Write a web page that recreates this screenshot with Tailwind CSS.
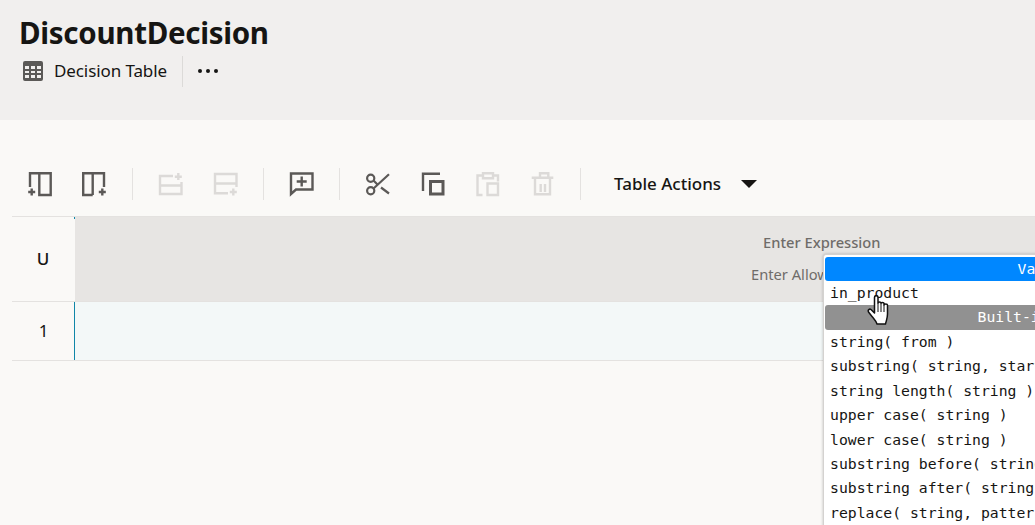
<!doctype html>
<html lang="en">
  <head>
    <meta charset="UTF-8" />
    <title>DiscountDecision</title>
    <script src="https://cdn.jsdelivr.net/npm/@tailwindcss/browser@4"></script>
  </head>
  <body class="bg-[#faf9f7]">
    <div class="relative h-[525px] w-[1035px] overflow-hidden font-['Noto_Sans','Open_Sans',sans-serif] text-[#161513]">
      <!-- page header -->
      <header class="h-[120px] bg-[#f1efee] pl-5 pt-[14px]">
        <h1 class="-ml-px text-[29.5px] leading-[38px] font-bold tracking-[-0.3px]">DiscountDecision</h1>
        <div class="mt-[3px] flex h-[32px] items-center">
          <svg class="ml-[2px] h-[22px] w-[22px] text-[#5b5957]" viewBox="0 0 22 22" fill="currentColor">
            <path fill-rule="evenodd" d="M3 1h16a2 2 0 0 1 2 2v16a2 2 0 0 1-2 2H3a2 2 0 0 1-2-2V3a2 2 0 0 1 2-2zm0 5v3h4V6H3zm6 0v3h4V6H9zm6 0v3h4V6h-4zM3 11v2h4v-2H3zm6 0v2h4v-2H9zm6 0v2h4v-2h-4zM3 15v3h4v-3H3zm6 0v3h4v-3H9zm6 0v3h4v-3h-4z" />
          </svg>
          <span class="ml-[10px] text-[17px] tracking-[-0.1px]">Decision Table</span>
          <div class="ml-[15px] h-[31px] w-px bg-[#dcdad8]"></div>
          <div class="ml-[15px] flex gap-[4px]">
            <span class="h-[4px] w-[4px] rounded-full bg-[#161513]"></span>
            <span class="h-[4px] w-[4px] rounded-full bg-[#161513]"></span>
            <span class="h-[4px] w-[4px] rounded-full bg-[#161513]"></span>
          </div>
        </div>
      </header>

      <!-- toolbar -->
      <div class="flex h-[96px] items-center pl-[27px] pt-[32px]">
        <svg class="h-6 w-6 overflow-visible text-[#5b5957]" viewBox="0 0 24 24" fill="none" stroke="currentColor" stroke-width="2.400">
          <path d="M3 15V1.200h20.700V23H12.300V1.200" /><path d="M4.700 16.500v7M1.200 20h7" />
        </svg>
        <svg class="ml-[31px] h-6 w-6 overflow-visible text-[#5b5957]" viewBox="0 0 24 24" fill="none" stroke="currentColor" stroke-width="2.400">
          <path d="M10.700 23H1.200V1.200H22V15M10.700 23V1.200" /><path d="M20.300 16.500v7M16.800 20h7" />
        </svg>
        <div class="ml-[26px] h-[32px] w-px bg-[#e4e2e0]"></div>
        <svg class="ml-[25px] h-6 w-6 overflow-visible text-[#dcdad8]" viewBox="0 0 24 24" fill="none" stroke="currentColor" stroke-width="2.400">
          <path d="M15 4H2v18h21.500V10M2 13.500h21.500" /><path d="M20.300 1v7M16.800 4.700h7" />
        </svg>
        <svg class="ml-[31px] h-6 w-6 overflow-visible text-[#dcdad8]" viewBox="0 0 24 24" fill="none" stroke="currentColor" stroke-width="2.400">
          <path d="M15 21.300H2V2h21.500v13M2 11.500h21.500" /><path d="M20.300 16.500v7M16.800 20h7" />
        </svg>
        <div class="ml-[26px] h-[32px] w-px bg-[#e4e2e0]"></div>
        <svg class="ml-[25px] h-6 w-6 overflow-visible text-[#5b5957]" viewBox="0 0 24 24" fill="none" stroke="currentColor" stroke-width="2.400">
          <path d="M2 1.500h21.500v16H7l-5 4.500zM12.700 4.500v10M7.700 9.500h10" />
        </svg>
        <div class="ml-[26px] h-[32px] w-px bg-[#e4e2e0]"></div>
        <svg class="ml-[25px] h-6 w-6 overflow-visible text-[#5b5957]" viewBox="0 0 24 24" fill="none" stroke="currentColor" stroke-width="2.200">
          <circle cx="5.700" cy="6.300" r="3.600" /><circle cx="5.700" cy="18.700" r="3.600" /><path d="M8.500 16.500L24 2.300M8.500 8.500l4.500 4.500M16 15.500l8 6" />
        </svg>
        <svg class="ml-[31px] h-6 w-6 overflow-visible text-[#5b5957]" viewBox="0 0 24 24" fill="none" stroke="currentColor" stroke-width="2.400">
          <path d="M3 19V1.700h17" /><path stroke-width="3" d="M10.500 9.500h12.500v12.500H10.500z" />
        </svg>
        <svg class="ml-[31px] h-6 w-6 overflow-visible text-[#dcdad8]" viewBox="0 0 24 24" fill="none" stroke="currentColor" stroke-width="2.400">
          <path d="M7 3.500H2.500V23h5M18 3.500h5v6M8 1.300h10v5H8zM12.500 11.500h10.500V23H12.500z" />
        </svg>
        <svg class="ml-[31px] h-6 w-6 overflow-visible text-[#dcdad8]" viewBox="0 0 24 24" fill="none" stroke="currentColor" stroke-width="2.400">
          <path d="M1.700 5.700h21.600M10 5.700V1.300h8.300v4.400M5 5.700v16.600h15V5.700M10.700 12v8M15 12v8" />
        </svg>
        <div class="ml-[26px] h-[32px] w-px bg-[#e4e2e0]"></div>
        <span class="ml-[33px] text-[17px] font-medium">Table Actions</span>
        <span class="ml-[20px] h-0 w-0 border-x-[8px] border-t-[8px] border-x-transparent border-t-[#161513]"></span>
      </div>

      <!-- decision table -->
      <div class="ml-3">
        <div class="flex h-[86px] border-y border-[#e4e2e0]">
          <div class="flex w-[62px] items-center justify-center text-[17px] font-medium">U</div>
          <div class="h-[2px] w-px bg-[#0f86a8]"></div>
          <div class="relative flex-1 bg-[#e7e5e3] text-[14.7px] whitespace-nowrap text-[#6f6c69]">
            <div class="absolute top-[14px] left-[688px] font-medium">Enter Expression</div>
            <div class="absolute top-[46px] left-[676px]">Enter Allowed Values</div>
          </div>
        </div>
        <div class="flex h-[59px] border-b border-[#e4e2e0]">
          <div class="flex w-[62px] items-center justify-center pl-[1px] text-[17px]">1</div>
          <div class="flex-1 border-l border-[#0f86a8] bg-[#f3f8f8]"></div>
        </div>
      </div>

      <!-- autocomplete popup -->
      <div class="absolute top-[254px] left-[823px] h-[300px] w-[468px] rounded-[3px] border border-[#d4d2d0] bg-white pt-[2px] pl-[1px] font-['DejaVu_Sans_Mono',monospace] text-[14.75px] leading-[24.4px] whitespace-nowrap text-[#161513] shadow-[0_0_3px_rgba(0,0,0,0.25)]">
        <div class="flex h-[24px] justify-center rounded-[3px] bg-[#0087ff] text-white">Variables</div>
        <div class="pl-[5px]">in_product</div>
        <div class="flex h-[24.6px] justify-center rounded-[3px] bg-[#919191] text-white">Built-in Functions</div>
        <div class="pl-[5px]">string( from )</div>
        <div class="pl-[5px]">substring( string, start position, length? )</div>
        <div class="pl-[5px]">string length( string )</div>
        <div class="pl-[5px]">upper case( string )</div>
        <div class="pl-[5px]">lower case( string )</div>
        <div class="pl-[5px]">substring before( string, match )</div>
        <div class="pl-[5px]">substring after( string, match )</div>
        <div class="pl-[5px]">replace( string, pattern, replacement )</div>
      </div>

      <!-- mouse pointer -->
      <svg class="absolute top-[295px] left-[867px] h-[30px] w-[24px]" viewBox="0 0 24 30">
        <path fill="#fff" stroke="#111" stroke-width="1.500" stroke-linejoin="round" d="M7.500 2.500c0-2.500 3.500-2.500 3.500 0V8c0-1.500 3-1.500 3 0v.5c0-1.500 3-1.500 3 0V10c0-1.500 3.500-1.500 3.500 0v9c0 4-1 6-2 10H10c-1-3-3-5-5-7.500L1.500 17c-1-2 1-3.500 2.500-2.500L7.500 18z" />
        <path stroke="#111" stroke-width="1" d="M11 8v9M14 9v8M17 10v7" />
      </svg>
    </div>
  </body>
</html>
